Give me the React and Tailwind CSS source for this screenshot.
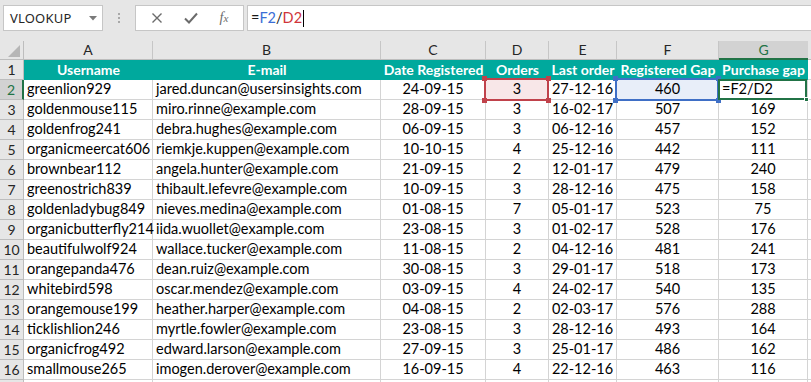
import React from "react";

const cols = "grid grid-cols-[24px_129px_228px_105px_63px_68px_102px_89px_1fr]";

const headers = ["Username", "E-mail", "Date Registered", "Orders", "Last order", "Registered Gap", "Purchase gap"];

const rows = [
	["greenlion929", "jared.duncan@usersinsights.com", "24-09-15", "3", "27-12-16", "460", "=F2/D2"],
	["goldenmouse115", "miro.rinne@example.com", "28-09-15", "3", "16-02-17", "507", "169"],
	["goldenfrog241", "debra.hughes@example.com", "06-09-15", "3", "06-12-16", "457", "152"],
	["organicmeercat606", "riemkje.kuppen@example.com", "10-10-15", "4", "25-12-16", "442", "111"],
	["brownbear112", "angela.hunter@example.com", "21-09-15", "2", "12-01-17", "479", "240"],
	["greenostrich839", "thibault.lefevre@example.com", "10-09-15", "3", "28-12-16", "475", "158"],
	["goldenladybug849", "nieves.medina@example.com", "01-08-15", "7", "05-01-17", "523", "75"],
	["organicbutterfly214", "iida.wuollet@example.com", "23-08-15", "3", "01-02-17", "528", "176"],
	["beautifulwolf924", "wallace.tucker@example.com", "11-08-15", "2", "04-12-16", "481", "241"],
	["orangepanda476", "dean.ruiz@example.com", "30-08-15", "3", "29-01-17", "518", "173"],
	["whitebird598", "oscar.mendez@example.com", "03-09-15", "4", "24-02-17", "540", "135"],
	["orangemouse199", "heather.harper@example.com", "04-08-15", "2", "02-03-17", "576", "288"],
	["ticklishlion246", "myrtle.fowler@example.com", "23-08-15", "3", "28-12-16", "493", "164"],
	["organicfrog492", "edward.larson@example.com", "27-09-15", "3", "25-01-17", "486", "162"],
	["smallmouse265", "imogen.derover@example.com", "16-09-15", "4", "22-12-16", "463", "116"],
];

function Handle({ className }) {
	return <span className={"absolute w-[5px] h-[5px] " + className} />;
}

function Toolbar() {
	return (
		<div className="flex items-start h-[41px] pt-[5px] pl-[3px] bg-[#e6e6e6] font-['Noto_Sans',sans-serif]">
			<div className="w-[100px] h-[26px] bg-white border border-[#c6c6c6] flex items-center justify-between pl-[6px] pr-[5px]">
				<span className="text-[13px] text-[#262626] tracking-[0.2px]">VLOOKUP</span>
				<svg width="8" height="5" viewBox="0 0 8 5">
					<path d="M0 0h8L4 4.5z" fill="#7a7a7a" />
				</svg>
			</div>
			<div className="w-[32px] h-[26px] flex flex-col items-center justify-center gap-[2px]">
				<span className="w-[2px] h-[2px] bg-[#a8a8a8]" />
				<span className="w-[2px] h-[2px] bg-[#a8a8a8]" />
				<span className="w-[2px] h-[2px] bg-[#a8a8a8]" />
			</div>
			<div className="w-[109px] h-[26px] bg-white border border-[#c6c6c6] flex items-center justify-around px-[4px]">
				<svg width="12" height="12" viewBox="0 0 12 12">
					<path d="M1.5 1.5l9 9M10.5 1.5l-9 9" stroke="#6b6b6b" strokeWidth="1.4" />
				</svg>
				<svg width="14" height="12" viewBox="0 0 14 12">
					<path d="M1 6.5l4 4L13 1.5" stroke="#6b6b6b" strokeWidth="2" fill="none" />
				</svg>
				<span className="font-['Liberation_Serif',serif] italic text-[14px] text-[#6b6b6b] leading-none">
					f<span className="text-[11px]">x</span>
				</span>
			</div>
			<div className="ml-[3px] flex-1 h-[26px] bg-white border border-r-0 border-[#c6c6c6] flex items-center pl-[3px] font-['Lato',sans-serif] text-[14.5px] text-[#1a1a1a]">
				<span>=</span>
				<span className="text-[#3b6ed6]">F2</span>
				<span>/</span>
				<span className="text-[#d0343a]">D2</span>
				<span className="w-px h-[17px] bg-black ml-px" />
			</div>
		</div>
	);
}

function ColumnHeader() {
	const letters = ["A", "B", "C", "D", "E", "F", "G"];
	return (
		<div className={cols + " h-[19px] bg-[#e6e6e6] border-b border-[#bdbdbd] text-[14px] text-[#262626]"}>
			<div className="relative border-r border-[#bdbdbd]">
				<svg className="absolute right-[3px] bottom-[2px]" width="12" height="12" viewBox="0 0 12 12">
					<path d="M12 0V12H0z" fill="#b6b6b6" />
				</svg>
			</div>
			{letters.map((l) =>
				l === "G" ? (
					<div key={l} className="flex items-center justify-center bg-[#d2d2d2] border-b-2 border-[#217346] text-[#217346] -mb-px">
						{l}
					</div>
				) : (
					<div key={l} className="flex items-center justify-center border-r border-[#c6c6c6]">
						{l}
					</div>
				)
			)}
			<div />
		</div>
	);
}

function HeaderRow() {
	return (
		<div className={cols + " h-[20px] text-[14px]"}>
			<div className="flex items-center justify-center bg-[#e6e6e6] border-r border-b border-[#bdbdbd] text-[14px] text-[#262626]">1</div>
			{headers.map((h) => (
				<div key={h} className="flex items-center justify-center bg-[#00a99d] text-white font-bold whitespace-nowrap">
					{h}
				</div>
			))}
			<div className="border-b border-[#d4d4d4]" />
		</div>
	);
}

function DataRow({ r, i }) {
	const n = i + 2;
	const active = n === 2;
	const cell = "flex items-center border-r border-b border-[#d4d4d4] whitespace-nowrap overflow-visible";
	return (
		<div className={cols + " h-[20px] text-[14.5px] text-black"}>
			<div
				className={
					"flex items-center justify-center border-b text-[14px] " +
					(active
						? "bg-[#d2d2d2] border-[#bdbdbd] border-r-2 border-r-[#217346] text-[#217346]"
						: "bg-[#e6e6e6] border-[#bdbdbd] border-r text-[#262626]")
				}
			>
				{n}
			</div>
			<div className={cell + " pl-[3px]"}>{r[0]}</div>
			<div className={cell + " pl-[3px]"}>{r[1]}</div>
			<div className={cell + " justify-center"}>{r[2]}</div>
			{active ? (
				<div className={cell + " justify-center relative bg-[#f8e7e8]"}>
					<span className="absolute -left-[2px] -top-[2px] -right-[1px] -bottom-[2px] border-2 border-[#c0424b]" />
					<Handle className="bg-[#c0424b] -left-[4px] -top-[4px]" />
					<Handle className="bg-[#c0424b] -right-[3px] -top-[4px]" />
					<Handle className="bg-[#c0424b] -left-[4px] -bottom-[4px]" />
					<Handle className="bg-[#c0424b] -right-[3px] -bottom-[4px]" />
					<span className="relative">{r[3]}</span>
				</div>
			) : (
				<div className={cell + " justify-center"}>{r[3]}</div>
			)}
			<div className={cell + " justify-center"}>{r[4]}</div>
			{active ? (
				<div className={cell + " justify-center relative bg-[#e8eef9]"}>
					<span className="absolute -left-[2px] -top-[2px] -right-[1px] -bottom-[2px] border-2 border-[#3f6fc6]" />
					<Handle className="bg-[#3f6fc6] -left-[4px] -top-[4px]" />
					<Handle className="bg-[#3f6fc6] -right-[3px] -top-[4px]" />
					<Handle className="bg-[#3f6fc6] -left-[4px] -bottom-[4px]" />
					<Handle className="bg-[#3f6fc6] -right-[3px] -bottom-[4px]" />
					<span className="relative">{r[5]}</span>
				</div>
			) : (
				<div className={cell + " justify-center"}>{r[5]}</div>
			)}
			{active ? (
				<div className={cell + " pl-[3px] relative"}>
					<span className="absolute -left-[1px] -top-[1px] right-[0px] -bottom-[1px] border-2 border-[#217346]" />
					<Handle className="bg-[#217346] -right-[2px] -bottom-[3px] border border-white" />
					<span className="relative">{r[6]}</span>
				</div>
			) : (
				<div className={cell + " justify-center"}>{r[6]}</div>
			)}
			<div className="border-b border-[#d4d4d4]" />
		</div>
	);
}

export default function App() {
	return (
		<div className="w-[811px] h-[382px] overflow-hidden bg-white font-['Lato',sans-serif] leading-none">
			<Toolbar />
			<ColumnHeader />
			<HeaderRow />
			{rows.map((r, i) => (
				<DataRow key={i} r={r} i={i} />
			))}
			<div className={cols + " h-[20px]"}>
				<div className="bg-[#e6e6e6] border-r border-[#bdbdbd]" />
				{headers.map((h) => (
					<div key={h} className="border-r border-[#d4d4d4]" />
				))}
				<div />
			</div>
		</div>
	);
}
